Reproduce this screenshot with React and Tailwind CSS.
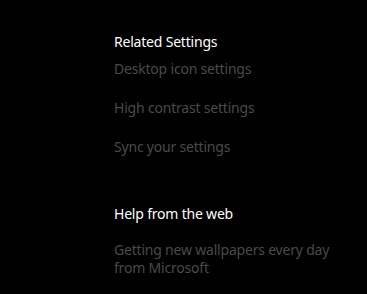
export default function App() {
  const links = ["Desktop icon settings", "High contrast settings", "Sync your settings"];

  return (
    <div className="w-[367px] h-[294px] bg-black overflow-hidden pl-[114px] pt-[32px] font-['Noto_Sans',sans-serif] text-[14px] tracking-[-0.2px]">
      <div className="w-[235px]">
        <h2 className="text-white leading-[20px]">Related Settings</h2>
        <div className="mt-[7px] flex flex-col gap-[19px]">
          {links.map((l) => (
            <a key={l} className="text-[#4a4a4a] leading-[20px]">
              {l}
            </a>
          ))}
        </div>

        <h2 className="mt-[47px] text-white leading-[20px]">Help from the web</h2>
        <p className="mt-[17px] text-[#4a4a4a] leading-[18px]">
          Getting new wallpapers every day from Microsoft
        </p>
      </div>
    </div>
  );
}
